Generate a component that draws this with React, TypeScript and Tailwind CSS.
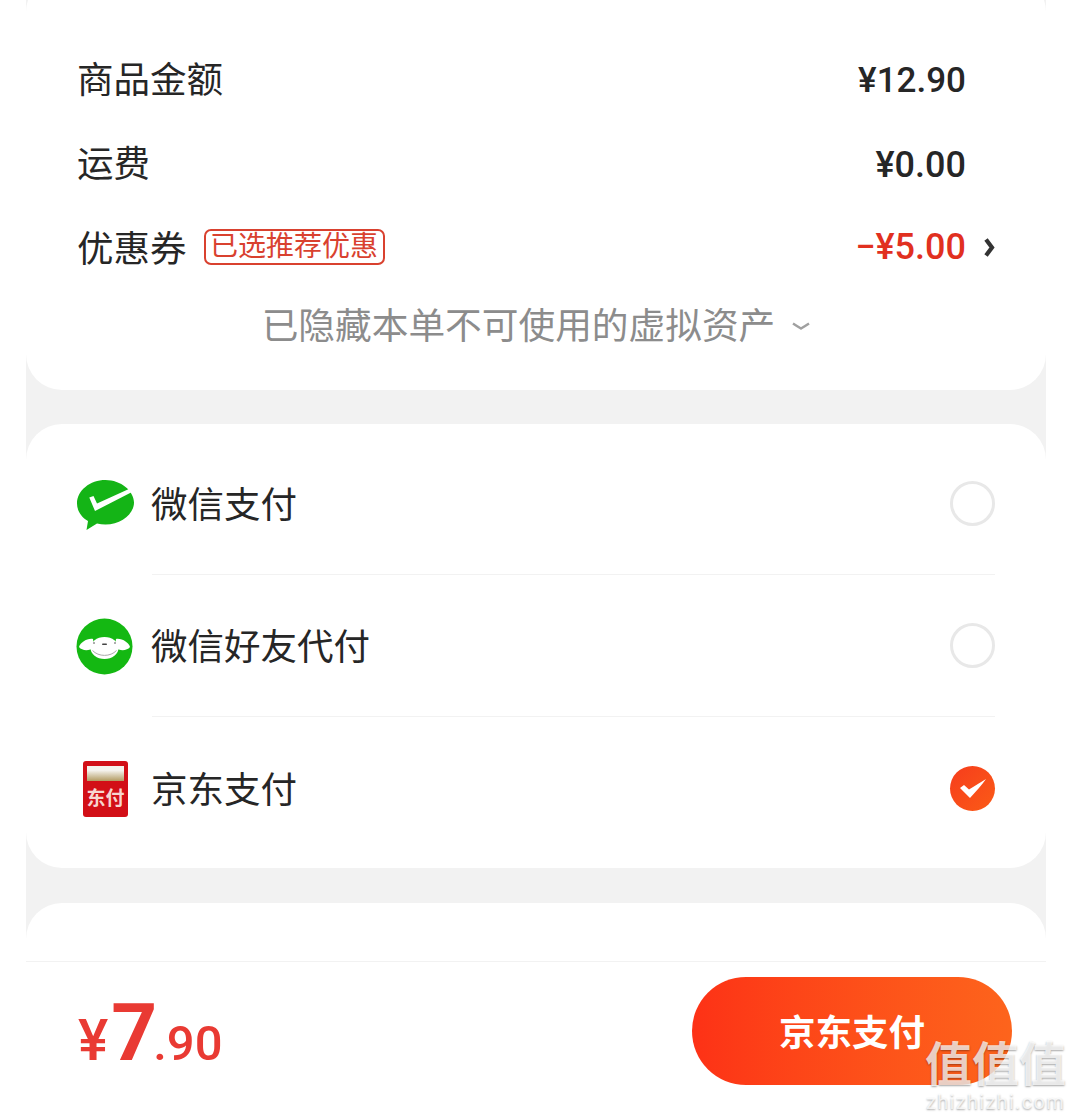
const font = { fontFamily: '"Roboto", "Noto Sans CJK SC", sans-serif' }

function WechatIcon() {
  return (
    <svg width="58" height="52" viewBox="0 0 58 52" className="mt-[3px] ml-[1px]">
      <path d="M28.500 0C13 0 0 10.500 0 23.500c0 7 4 13.500 11 17.500L9.500 50 20 43.500c2.800.7 5.600 1 8.500 1C44 44.500 57 34 57 22.500S44 0 28.500 0z" fill="#14b416" />
      <path d="M12.300 17.500L16.500 16 20 23.500 53 8.500 55 12 18 31z" fill="#fff" />
    </svg>
  )
}

function FriendPayIcon() {
  return (
    <svg width="57" height="57" viewBox="0 0 57 57">
      <circle cx="28.500" cy="28.500" r="28" fill="#14b812" />
      <ellipse cx="28.500" cy="30" rx="14" ry="11" fill="#fff" />
      <path d="M17 21C11 20 4 25 3 29c3 4 10 4 15 1z" fill="#fff" />
      <path d="M40 21c6-1 13 4 14 8-3 4-10 4-15 1z" fill="#fff" />
      <rect x="26" y="25.500" width="5" height="1.500" rx="0.750" fill="#444" />
      <circle cx="18" cy="25" r="0.800" fill="#444" />
      <circle cx="39" cy="25" r="0.800" fill="#444" />
      <path d="M16.500 32.500c6 6.500 18 6.500 24 0" stroke="#aaa" strokeWidth="1" fill="none" />
    </svg>
  )
}

function JdPayIcon() {
  return (
    <div className="mt-[2px] ml-[7px] flex h-[56px] w-[45px] flex-col items-center rounded-[3px] bg-[#d20f17] pt-[5px]">
      <div className="h-[15px] w-[37px] bg-gradient-to-b from-[#f4f2ec] from-30% to-[#b39c62]" />
      <span className="mt-[7px] text-[19px] leading-[22px] font-bold text-[#f7d5d0]">东付</span>
    </div>
  )
}

function Radio({ checked }: { checked?: boolean }) {
  if (checked) {
    return (
      <div className="flex h-[45px] w-[45px] items-center justify-center rounded-full bg-gradient-to-br from-[#f63c1c] to-[#fb5a16]">
        <svg width="28" height="22" viewBox="0 0 28 22">
          <path d="M1 11l4-3 5 4.500L27 2c-4 6-10 12-16 19z" fill="#fff" />
        </svg>
      </div>
    )
  }
  return <div className="h-[45px] w-[45px] rounded-full border-[3px] border-[#e8e8e8]" />
}

function PriceRow({ label, value, wide }: { label: string; value: string; wide?: boolean }) {
  return (
    <div className="flex h-[84px] items-center justify-between pr-[80px] pl-[51px]">
      <span className="text-[36.500px] text-[#262626]">{label}</span>
      <span className={`font-medium text-[#262626] ${wide ? 'text-[36px]' : 'text-[35px]'}`}>{value}</span>
    </div>
  )
}

function PayRow({ icon, name, checked, last }: { icon: React.ReactNode; name: string; checked?: boolean; last?: boolean }) {
  return (
    <div className="flex h-[142px] items-center pr-[51px] pl-[50px]">
      <div className="flex w-[76px] shrink-0 items-center">{icon}</div>
      <div className={`flex h-full flex-1 items-center justify-between ${last ? '' : 'border-b border-[#f2f2f2]'}`}>
        <span className="-ml-[1px] pt-[6px] text-[36.500px] text-[#262626]">{name}</span>
        <Radio checked={checked} />
      </div>
    </div>
  )
}

export default function App() {
  return (
    <div className="relative flex h-[1120px] w-[1074px] flex-col overflow-hidden bg-white" style={font}>
      <main className="mr-[28px] ml-[26px] h-[961px] shrink-0 overflow-hidden bg-[#f2f2f2]">
        {/* Price summary, scrolled slightly past the top */}
        <section className="-mt-[24px] flex h-[414px] flex-col rounded-[36px] bg-white pt-[63px]">
          <PriceRow label="商品金额" value="¥12.90" />
          <PriceRow label="运费" value="¥0.00" wide />
          <div className="flex h-[80px] items-center justify-between pr-[51px] pl-[51px]">
            <div className="flex items-center gap-[17px]">
              <span className="pt-[6px] text-[36.500px] text-[#262626]">优惠券</span>
              <span className="flex h-[36px] items-center rounded-[7px] border-2 border-[#d9412f] px-[4.500px] text-[28px] text-[#d9412f]">已选推荐优惠</span>
            </div>
            <div className="flex items-center gap-[18px]">
              <span className="text-[36px] font-medium text-[#e1301f]">−¥5.00</span>
              <svg width="11" height="21" viewBox="0 0 11 21">
                <path d="M2 2.500l6 8-6 8" stroke="#333" strokeWidth="4.200" fill="none" />
              </svg>
            </div>
          </div>
          <div className="flex items-center justify-center gap-[17px] pt-[12px]">
            <span className="text-[36.700px] text-[#8c8c8c]">已隐藏本单不可使用的虚拟资产</span>
            <svg width="18" height="9" viewBox="0 0 18 9">
              <path d="M1 1.500c3 2 5.500 3.500 8 5 2.500-1.500 5-3 8-5" stroke="#a0a0a0" strokeWidth="2.400" fill="none" />
            </svg>
          </div>
        </section>

        {/* Payment methods */}
        <section className="mt-[34px] h-[444px] rounded-[36px] bg-white pt-[9px]">
          <PayRow icon={<WechatIcon />} name="微信支付" />
          <PayRow icon={<FriendPayIcon />} name="微信好友代付" />
          <PayRow icon={<JdPayIcon />} name="京东支付" checked last />
        </section>

        <section className="mt-[35px] h-[100px] rounded-t-[36px] bg-white" />
      </main>

      {/* Bottom bar */}
      <footer className="mr-[28px] ml-[26px] flex flex-1 items-start justify-between border-t border-[#f2f2f2] pt-[15px] pr-[34px] pl-[52px]">
        <div className="mt-[21px] flex items-baseline font-medium text-[#e93a33]">
          <span className="text-[57px] leading-[70px]">¥</span>
          <span className="ml-[3px] text-[80px] leading-[70px] font-bold">7</span>
          <span className="-ml-[4px] text-[49px] leading-[70px]">.90</span>
        </div>
        <button className="flex h-[108px] w-[320px] items-center justify-center rounded-full bg-gradient-to-r from-[#fd3116] to-[#fd641c] pt-[6px] text-[36.500px] font-bold text-white">京东支付</button>
      </footer>

      {/* Watermark */}
      <div className="absolute right-[8px] bottom-[7px] flex flex-col items-center text-white/75 [text-shadow:0_1px_2px_rgba(0,0,0,0.35)]">
        <span className="text-[47px] leading-[52px] font-bold">值值值</span>
        <span className="text-[20px] leading-[22px] tracking-[1.300px]">zhizhizhi.com</span>
      </div>
    </div>
  )
}
